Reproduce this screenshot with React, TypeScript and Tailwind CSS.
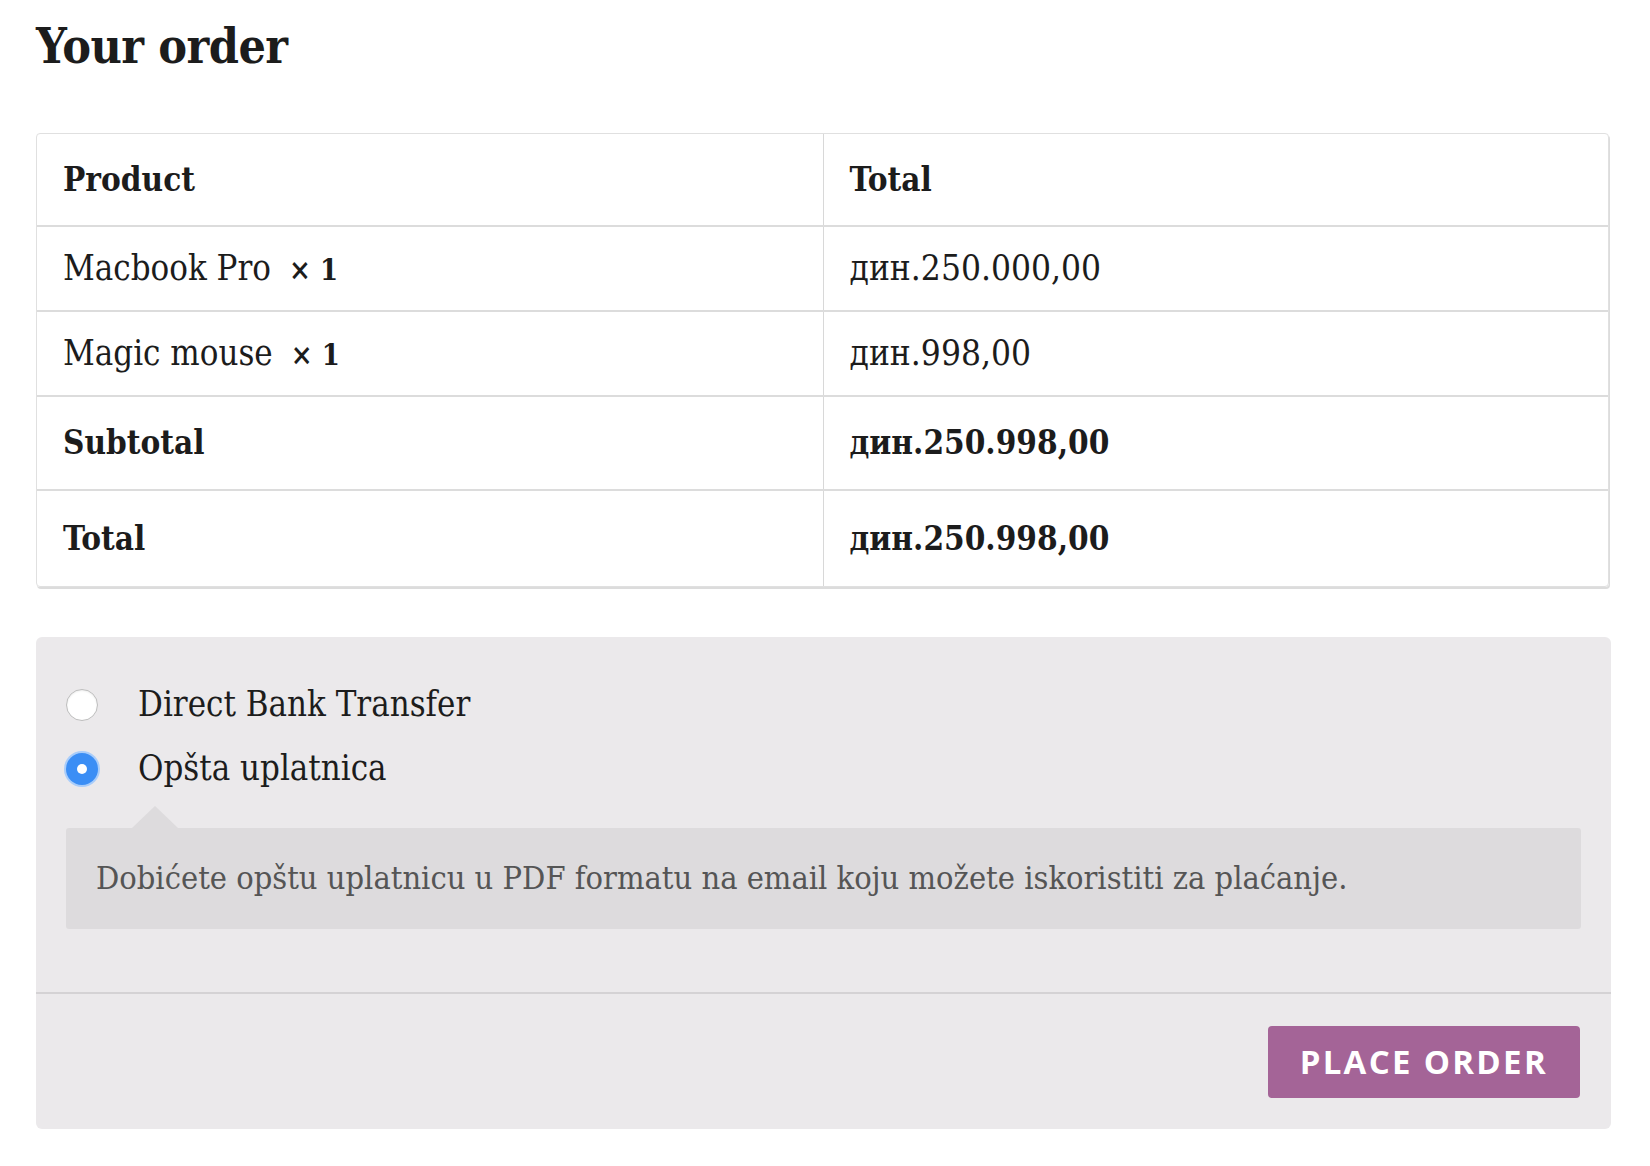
const serif = "font-['DejaVu_Serif','Liberation_Serif',serif] font-stretch-condensed";

function Row({
  left,
  right,
  height,
  bold,
  last,
}: {
  left: React.ReactNode;
  right: React.ReactNode;
  height: string;
  bold?: boolean;
  last?: boolean;
}) {
  return (
    <div
      className={`grid grid-cols-2 ${height} ${last ? "" : "border-b-2 border-[#dcdcdc]"} ${
        bold ? "text-[33px] font-bold" : "text-[35px]"
      }`}
    >
      <div className="flex items-center pl-[26px]">{left}</div>
      <div className="flex items-center border-l border-[#d8d8d8] pl-[26px]">{right}</div>
    </div>
  );
}

function Qty() {
  return <strong className="ml-[18px] text-[29px] font-bold">× 1</strong>;
}

export default function App() {
  return (
    <div className={`${serif} min-h-screen bg-white px-[36px] pt-[14px] text-[#1c1c1c]`}>
      <h3 className="text-[48px] font-bold leading-[64px] tracking-[-0.5px]">Your order</h3>

      <div className="mt-[55px] mr-[5px] overflow-hidden rounded-[4px] border border-[#e0e0e0] shadow-[1px_2px_0_#dcdcdc]">
        <Row left="Product" right="Total" height="h-[93px]" bold />
        <Row
          left={
            <span className="text-[34.5px]">
              Macbook Pro
              <Qty />
            </span>
          }
          right="дин.250.000,00"
          height="h-[85px]"
        />
        <Row
          left={
            <span className="text-[34.5px]">
              Magic mouse
              <Qty />
            </span>
          }
          right="дин.998,00"
          height="h-[85px]"
        />
        <Row left="Subtotal" right="дин.250.998,00" height="h-[94px]" bold />
        <Row left="Total" right="дин.250.998,00" height="h-[95px]" bold last />
      </div>

      <div className="mt-[50px] mr-[3px] rounded-[6px] bg-[#ebe9eb]">
        <div className="px-[30px] pt-[51px] pb-[63px]">
          <ul className="flex flex-col gap-[30px] text-[34.5px]">
            <li className="flex h-[34px] items-center gap-[40px]">
              <span className="h-[32px] w-[32px] shrink-0 rounded-full border border-[#bdbdbd] bg-white shadow-[inset_0_1px_2px_rgba(0,0,0,0.08)]" />
              <span>Direct Bank Transfer</span>
            </li>
            <li className="flex h-[34px] items-center gap-[40px]">
              <span className="flex h-[32px] w-[32px] shrink-0 items-center justify-center rounded-full bg-[#3b8ef5] ring-2 ring-[#a9cdfa]">
                <span className="h-[10px] w-[10px] rounded-full bg-white" />
              </span>
              <span>Opšta uplatnica</span>
            </li>
          </ul>

          <div className="relative mt-[42px] rounded-[3px] bg-[#dddbdd] px-[30px] py-[29px] text-[32.3px] leading-[43px] text-[#555555]">
            <span className="absolute -top-[22px] left-[66px] h-0 w-0 border-x-[23px] border-b-[22px] border-x-transparent border-b-[#dddbdd]" />
            Dobićete opštu uplatnicu u PDF formatu na email koju možete iskoristiti za plaćanje.
          </div>
        </div>

        <div className="flex justify-end border-t-2 border-[#d4d2d4] px-[31px] pt-[32px] pb-[31px]">
          <button className="h-[72px] rounded-[4px] bg-[#a46497] px-[32px] font-['Open_Sans',sans-serif] text-[33px] font-bold tracking-[0.07em] text-white font-stretch-normal">
            PLACE ORDER
          </button>
        </div>
      </div>
    </div>
  );
}
